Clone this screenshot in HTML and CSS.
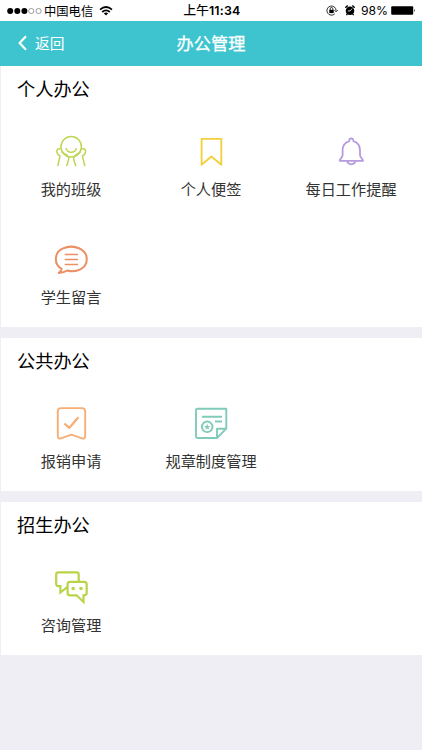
FILE: index.html
```html
<!DOCTYPE html>
<html lang="zh-CN">
<head>
<meta charset="utf-8">
<title>办公管理</title>
<link rel="stylesheet" href="styles.css">
</head>
<body>
<div class="status">
  <div class="status-left">
    <svg class="signal" width="36" height="8" viewBox="0 0 36 8"><g fill="#000"><circle cx="3.2" cy="4" r="3"/><circle cx="10.3" cy="4" r="3"/><circle cx="17.4" cy="4" r="3"/></g><g fill="none" stroke="#777" stroke-width=".7"><circle cx="24.2" cy="4" r="2.6"/><circle cx="31.6" cy="4" r="2.6"/></g></svg>
    <span class="carrier">中国电信</span>
    <svg class="wifi" width="14" height="10" viewBox="0 0 14 10"><g fill="none" stroke="#000" stroke-width="1.7"><path d="M1 3.6Q7-1.6 13 3.6"/><path d="M3.2 6Q7 2.7 10.8 6"/></g><path d="M4.8 7.3Q7 5.7 9.2 7.3L7 9.6Z"/></svg>
  </div>
  <div class="clock"><span class="ampm">上午</span>11:34</div>
  <div class="status-right">
    <svg width="12" height="11" viewBox="0 0 12 11"><path d="M10.1 5.5A4.6 4.6 0 1 0 8.8 8.8M8.4 5L10.1 6.8L11.7 5" fill="none" stroke="#000" stroke-width=".8"/><rect x="3.3" y="4.8" width="4.4" height="3.3"/><path d="M4.2 5V3.8a1.3 1.3 0 0 1 2.6 0V5" fill="none" stroke="#000" stroke-width=".8"/></svg>
    <svg class="alarm" width="10" height="11" viewBox="0 0 10 11"><circle cx="5" cy="5.7" r="4.3"/><path d="M.8 3A2 2 0 0 1 3 .9M7 .9A2 2 0 0 1 9.2 3M2.3 9L1.4 10.2M7.7 9l.9 1.2" fill="none" stroke="#000" stroke-width="1.4"/><path d="M7 3.6L5 6H2.8" fill="none" stroke="#fff" stroke-width=".8"/></svg>
    <span class="percent">98%</span>
    <svg class="battery" width="25" height="9" viewBox="0 0 25 9"><rect x=".2" y=".3" width="22" height="8.4" rx="1"/><path d="M23 3Q24.6 4.5 23 6Z"/></svg>
  </div>
</div>
<header class="navbar">
  <div class="back"><svg width="9" height="16" viewBox="0 0 9 16"><path d="M8 1.2L1.6 8L8 14.8" fill="none" stroke="#fff" stroke-width="2.1"/></svg><span>返回</span></div>
  <h1>办公管理</h1>
</header>
<main>
  <section class="panel">
    <h2>个人办公</h2>
    <div class="grid">
      <div class="item">
        <svg class="icon lime" viewBox="0 0 36 36"><circle cx="18.2" cy="12.8" r="10.2"/><path d="M13 14.1Q14 18.2 18.2 18.2T23.4 14.1"/><path d="M7.4 15C5 14.2 3.4 15.8 3.8 18.2C4 20 5.4 21.2 7 22L4.8 32.2"/><path d="M8.6 17.8C10.8 20 15.5 21 15.8 23.6C16 25.6 14.4 29 13.7 32.2"/><path d="M29 15C31.4 14.2 33 15.8 32.6 18.2C32.4 20 31 21.2 29.4 22L31.8 32.2"/><path d="M27.8 17.8C25.6 20 20.9 21 20.6 23.6C20.4 25.6 22 29 22.8 32.2"/></svg>
        <span>我的班级</span>
      </div>
      <div class="item">
        <svg class="icon yellow" viewBox="0 0 36 36"><path d="M8.6 4.8H28.3V30.8L18.4 22.5L8.6 30.8Z"/></svg>
        <span>个人便签</span>
      </div>
      <div class="item">
        <svg class="icon purple" viewBox="0 0 36 36"><path d="M16.2 7.1C15.7 3.6 20.8 3.6 20.4 7.1C25 8.5 27 11.5 27 16.5V21C27 24 30 24.6 30 26.8H6.7C6.7 24.6 9.6 24 9.6 21V16.5C9.6 11.5 11.7 8.5 16.2 7.1Z"/><path d="M14.2 27.2C15 31.3 21.6 31.3 22.4 27.2"/></svg>
        <span>每日工作提醒</span>
      </div>
      <div class="item">
        <svg class="icon coral" viewBox="0 0 36 36"><path d="M8.7 26.8C0.5 22.8 1.1 10.4 9.5 6.7C21 1.4 33.8 7.4 33.8 17C33.8 26.8 23 31.2 14.3 28.5C12.1 30.1 9.2 30.8 5.8 30.9C7.8 29.5 8.7 28.2 8.7 26.8Z"/><path class="lines" d="M11.7 12.6H25M11.7 17.6H25M11.7 22.5H25"/></svg>
        <span>学生留言</span>
      </div>
    </div>
  </section>
  <section class="panel short">
    <h2>公共办公</h2>
    <div class="grid">
      <div class="item">
        <svg class="icon orange" viewBox="0 0 36 36"><path d="M8 3.1H28.8Q32.2 3.1 32.2 6.5V31Q32.2 34.2 29 33.3L18.3 29.7L8 33.3Q4.8 34.2 4.8 31V6.5Q4.8 3.1 8 3.1Z"/><path class="tick" d="M11.4 18.5L16.4 22.8L25.4 12.2"/></svg>
        <span>报销申请</span>
      </div>
      <div class="item">
        <svg class="icon mint" viewBox="0 0 36 36"><path d="M4.4 3.7H33.3V23.7L24 33H4.4Q3 33 3 31.6V5.1Q3 3.7 4.4 3.7ZM24 33V23.7H33.3M8.8 11.7H29M22 16.5H29"/><circle cx="14.2" cy="21.8" r="5.3"/><path class="star" d="M14.2 18.8L15.1 20.9L17.2 21.1L15.6 22.5L16.1 24.6L14.2 23.5L12.3 24.6L12.8 22.5L11.2 21.1L13.3 20.9Z"/></svg>
        <span>规章制度管理</span>
      </div>
    </div>
  </section>
  <section class="panel short">
    <h2>招生办公</h2>
    <div class="grid">
      <div class="item">
        <svg class="icon green" viewBox="0 0 36 36"><path d="M14.5 17.8L7.4 23.5V17.1H5.2Q3.2 17.1 3.2 15.1V5.6Q3.2 3.4 5.4 3.4H23.7Q25.7 3.4 25.7 5.4V12.5"/><path d="M17 12.8H31.2Q33.7 12.8 33.7 15.2V24.1Q33.7 26.3 31.3 26.3H30.5V33L23.6 26.3H17Q14.6 26.3 14.6 23.9V15.2Q14.6 12.8 17 12.8Z"/><g class="eyes"><circle cx="20.2" cy="19.5" r="1.8"/><circle cx="28" cy="19.5" r="1.8"/></g></svg>
        <span>咨询管理</span>
      </div>
    </div>
  </section>
</main>
</body>
</html>
```
FILE: styles.css
```css
* { box-sizing: border-box; }
body {
  margin: 0;
  min-height: 750px;
  background: #efeef4;
  color: #333;
  font-family: "Noto Sans CJK SC", sans-serif;
}
svg { display: block; flex: none; }
.status {
  display: grid;
  grid-template-columns: 1fr auto 1fr;
  align-items: center;
  height: 21px;
  padding: 0 6px 0 7px;
  background: #fff;
  color: #000;
  font-size: 12.3px;
  line-height: 20px;
}
.status-left, .status-right { display: flex; align-items: center; }
.status-right { justify-content: flex-end; }
.carrier { margin-left: 1px; }
.wifi { margin-left: 6px; }
.clock { padding-left: 1px; font: 600 12.4px/20px Inter, sans-serif; letter-spacing: .2px; }
.ampm { font: 400 12.5px/20px "Noto Sans CJK SC", sans-serif; -webkit-text-stroke: .25px; }
.alarm { margin-left: 7px; }
.percent { margin-left: 6px; font: 12.2px/20px Inter, sans-serif; }
.battery { margin-left: 3px; }
.navbar {
  display: grid;
  grid-template-columns: 1fr auto 1fr;
  align-items: center;
  height: 45px;
  padding: 0 18px 2px;
  background: #3dc4cf;
  color: #fff;
}
.back { display: flex; align-items: center; gap: 8px; font-size: 14.7px; line-height: 20px; }
h1 { margin: 0; font-size: 17.2px; font-weight: 400; line-height: 24px; -webkit-text-stroke: .3px; }
main { display: flex; flex-direction: column; gap: 11px; padding-left: 1px; }
.panel { height: 261px; padding-top: 9px; background: #fff; }
.short { height: 153px; padding-top: 9px; }
h2 { margin: 0 0 0 16px; color: #000; font-size: 18.2px; font-weight: 400; line-height: 26px; }
.grid { display: grid; grid-template-columns: repeat(3, 140px); grid-auto-rows: 108px; margin-top: 33px; }
.short .grid { margin-top: 32px; }
.item { display: flex; flex-direction: column; align-items: center; font-size: 15.2px; line-height: 22px; }
.item span { margin-top: 7px; }
.short .item span { margin-top: 8px; }
.icon { width: 36px; height: 36px; fill: none; stroke: currentColor; stroke-width: 1.8; stroke-linejoin: round; }
.lime { color: #bdd654; stroke-width: 1.5; }
.yellow { color: #f2cf3b; }
.purple { color: #b79be0; }
.coral { color: #ed8f65; stroke-width: 2; }
.lines { stroke-width: 1.5; }
.orange { color: #f7ae75; stroke-width: 1.9; }
.tick { stroke-width: 2.3; }
.mint { color: #80cbb9; stroke-width: 1.9; }
.star, .eyes { fill: currentColor; stroke: none; }
.green { color: #b9d44a; stroke-width: 2.2; stroke-linejoin: miter; }
```
